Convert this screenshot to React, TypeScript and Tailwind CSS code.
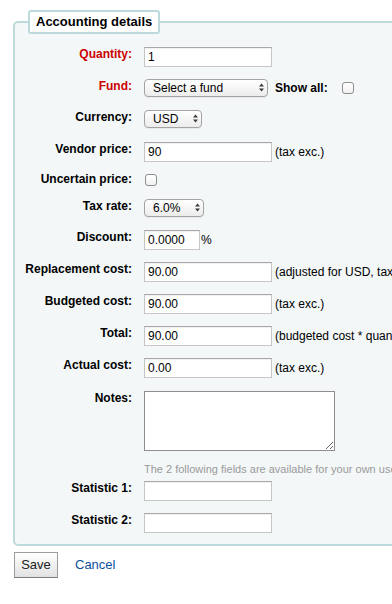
import type { ReactNode } from "react";

type RowProps = {
  label?: string;
  required?: boolean;
  height: string;
  children: ReactNode;
};

function Row({ label, required, height, children }: RowProps) {
  return (
    <div className={`flex items-start ${height}`}>
      <label
        className={
          required
            ? "w-[117px] shrink-0 text-right text-[12px] font-bold leading-[14px] text-[#cc0000]"
            : "w-[117px] shrink-0 text-right text-[12px] font-bold leading-[14px] text-black"
        }
      >
        {label}
      </label>
      <div className="ml-[12px] flex items-center whitespace-nowrap">{children}</div>
    </div>
  );
}

function TextInput({ value, width = "w-[128px]" }: { value?: string; width?: string }) {
  return (
    <input
      type="text"
      defaultValue={value}
      className={`${width} h-[20px] border border-[#c6c6c6] border-t-[#a8a8a8] bg-white px-[3px] text-[12px] text-black outline-none shadow-[inset_0_1px_1px_rgba(0,0,0,0.06)]`}
    />
  );
}

function UpDown() {
  return (
    <svg width="5" height="9" viewBox="0 0 5 9" className="pointer-events-none absolute top-[4px]">
      <path d="M2.5 0.5 L5 3.5 L0 3.5 Z" fill="#3a3a3a" />
      <path d="M2.5 8.5 L5 5.5 L0 5.5 Z" fill="#3a3a3a" />
    </svg>
  );
}

function Select({ value, width, arrow }: { value: string; width: string; arrow: string }) {
  return (
    <div className="relative inline-flex">
      <select
        defaultValue={value}
        className={`${width} h-[18px] appearance-none rounded-[4px] border border-[#a3a3a3] bg-gradient-to-b from-white to-[#ececec] pl-[8px] text-[12px] leading-[16px] text-black outline-none shadow-[0_1px_0_rgba(0,0,0,0.05)]`}
      >
        <option>{value}</option>
      </select>
      <span className={arrow}>
        <UpDown />
      </span>
    </div>
  );
}

function Checkbox({ extra = "" }: { extra?: string }) {
  return (
    <input
      type="checkbox"
      className={`h-[12px] w-[12px] appearance-none rounded-[3px] border border-[#8d8d8d] bg-gradient-to-b from-white to-[#f1f1f1] ${extra}`}
    />
  );
}

function Note({ children }: { children: ReactNode }) {
  return <span className="ml-[3px] text-[12px] text-black">{children}</span>;
}

export default function App() {
  return (
    <div className="h-[604px] w-[392px] overflow-hidden bg-white font-['Liberation_Sans',Arial,sans-serif]">
      <fieldset className="ml-[13px] mt-[10px] w-[440px] rounded-[5px] border-2 border-[#bcdadb] bg-[#f3f7f8] pb-[11px] pt-[13px]">
        <legend className="ml-[13px] rounded-[3px] border-2 border-[#bcdadb] bg-white px-[6px] py-[2px] text-[13px] font-bold leading-[16px] text-black">
          Accounting details
        </legend>

        <Row label="Quantity:" required height="h-[32px]">
          <TextInput value="1" />
        </Row>

        <Row label="Fund:" required height="h-[31px]">
          <Select value="Select a fund" width="w-[124px]" arrow="absolute left-[115px] top-0" />
          <span className="ml-[7px] text-[12px] font-bold text-black">Show all:</span>
          <Checkbox extra="ml-[14px]" />
        </Row>

        <Row label="Currency:" height="h-[32px]">
          <Select value="USD" width="w-[58px]" arrow="absolute left-[49px] top-0" />
        </Row>

        <Row label="Vendor price:" height="h-[30px]">
          <TextInput value="90" />
          <Note>(tax exc.)</Note>
        </Row>

        <Row label="Uncertain price:" height="h-[27px]">
          <Checkbox extra="ml-[1px] mt-[2px]" />
        </Row>

        <Row label="Tax rate:" height="h-[31px]">
          <Select value="6.0%" width="w-[60px]" arrow="absolute left-[51px] top-0" />
        </Row>

        <Row label="Discount:" height="h-[32px]">
          <TextInput value="0.0000" width="w-[56px]" />
          <span className="ml-[1px] text-[12px] text-black">%</span>
        </Row>

        <Row label="Replacement cost:" height="h-[32px]">
          <TextInput value="90.00" />
          <Note>(adjusted for USD, tax exc.)</Note>
        </Row>

        <Row label="Budgeted cost:" height="h-[32px]">
          <TextInput value="90.00" />
          <Note>(tax exc.)</Note>
        </Row>

        <Row label="Total:" height="h-[32px]">
          <TextInput value="90.00" />
          <Note>(budgeted cost * quantity)</Note>
        </Row>

        <Row label="Actual cost:" height="h-[33px]">
          <TextInput value="0.00" />
          <Note>(tax exc.)</Note>
        </Row>

        <Row label="Notes:" height="h-[71px]">
          <textarea className="h-[60px] w-[191px] border border-[#8e8e8e] bg-white outline-none" />
        </Row>

        <div className="h-[19px] whitespace-nowrap pl-[129px] text-[11px] leading-[14px] text-[#9a9a9a]">
          The 2 following fields are available for your own use.
        </div>

        <Row label="Statistic 1:" height="h-[32px]">
          <TextInput />
        </Row>

        <Row label="Statistic 2:" height="h-[20px]">
          <TextInput />
        </Row>
      </fieldset>

      <div className="ml-[14px] mt-[6px] flex items-center">
        <button
          type="button"
          className="h-[26px] w-[44px] border border-[#9c9c9c] border-b-[#7a7a7a] bg-gradient-to-b from-white to-[#e2e2e2] text-[13px] text-[#222]"
        >
          Save
        </button>
        <a href="#" className="ml-[17px] text-[13px] text-[#0b4f9e]">
          Cancel
        </a>
      </div>
    </div>
  );
}
